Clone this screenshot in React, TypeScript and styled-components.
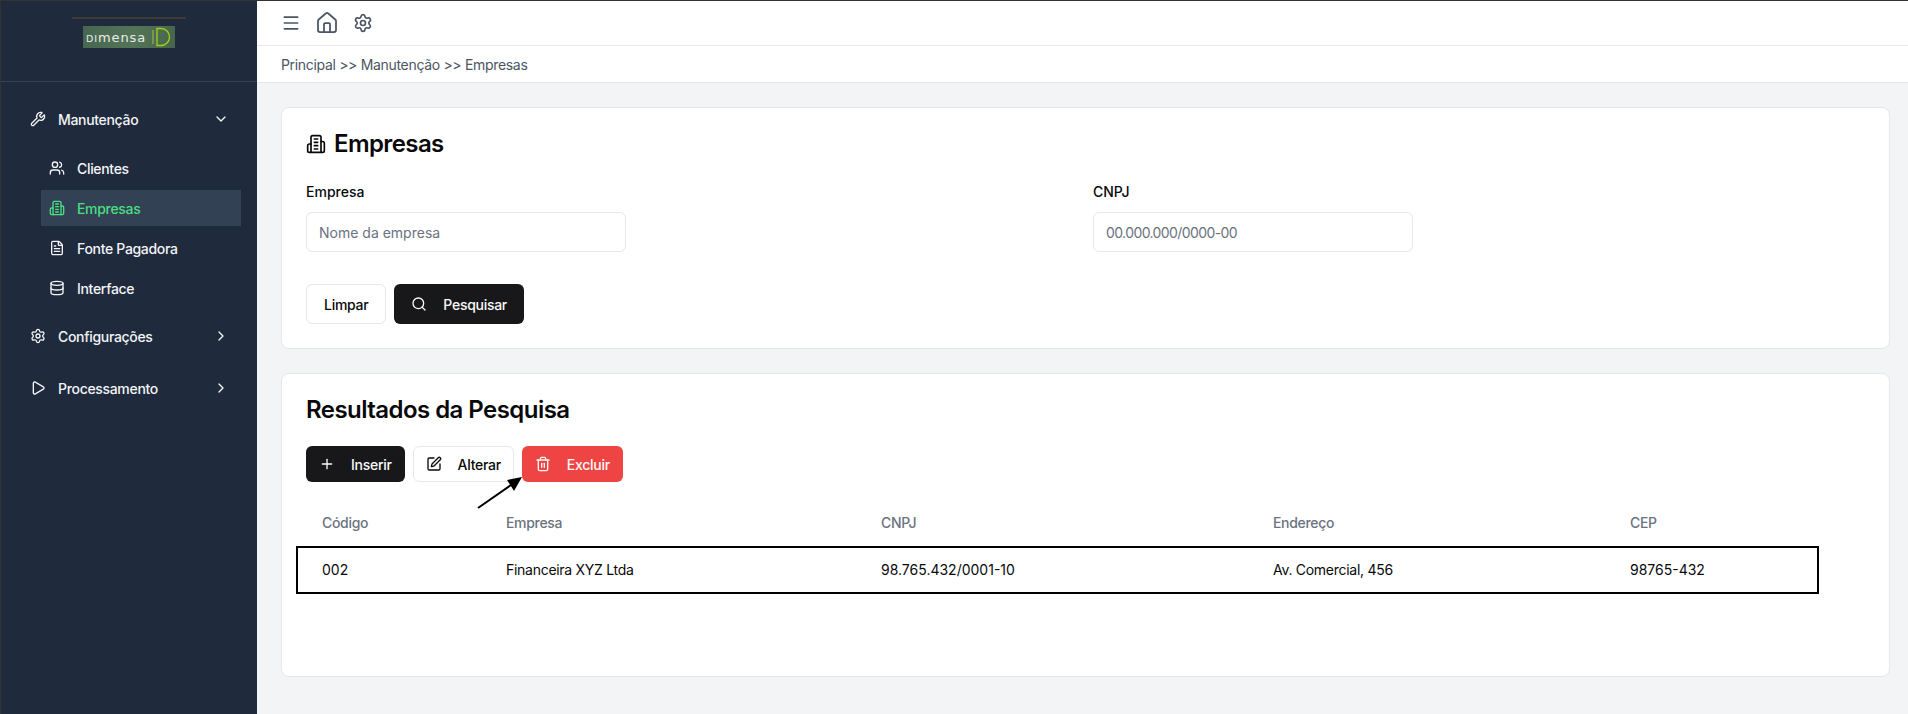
import React from "react";
import styled, { createGlobalStyle } from "styled-components";
import {
  ChevronDown,
  ChevronRight,
  Database,
  FileText,
  House,
  Menu,
  Play,
  Plus,
  Search,
  Settings,
  SquarePen,
  Trash2,
  Users,
  Wrench,
} from "lucide-react";

const GlobalStyle = createGlobalStyle`
  html, body {
    margin: 0;
    padding: 0;
    background: #f3f4f6;
  }
  body {
    font-family: Inter, "Noto Sans", sans-serif;
    letter-spacing: -0.02em;
  }
  * {
    box-sizing: border-box;
  }
`;

const Shell = styled.div`
  display: flex;
  width: 1908px;
  height: 714px;
  overflow: hidden;
  border-top: 1px solid #333;
  border-left: 1px solid #333;
  background: #f3f4f6;
`;

const Sidebar = styled.aside`
  width: 256px;
  flex-shrink: 0;
  background: #1f2a3d;
  color: #f3f4f6;
`;

const LogoArea = styled.div`
  height: 81px;
  border-bottom: 1px solid #374357;
  display: flex;
  flex-direction: column;
  align-items: center;
  padding-top: 16px;
`;

const LogoRule = styled.div`
  width: 114px;
  height: 2px;
  background: #3d3a38;
  margin-bottom: 7px;
`;

const LogoPlate = styled.div`
  width: 92px;
  height: 22px;
  display: flex;
  align-items: center;
  gap: 6px;
  padding-left: 3px;
  background: linear-gradient(100deg, #47664f 0%, #54745a 55%, #46654a 100%);
`;

const LogoText = styled.span`
  font-family: "DejaVu Sans", sans-serif;
  font-size: 13px;
  line-height: 1;
  letter-spacing: 0.9px;
  color: #e8eee6;
  b {
    font-weight: 400;
    font-size: 9.5px;
  }
`;

const Nav = styled.nav`
  display: flex;
  flex-direction: column;
  padding-top: 18px;
`;

const NavGroup = styled.div<{ $height: number }>`
  height: ${(p) => p.$height}px;
  padding: 0 28px 0 29px;
  display: flex;
  align-items: center;
  gap: 12px;
  font-size: 14px;
  font-weight: 500;
  svg:first-child {
    flex-shrink: 0;
  }
  span {
    flex: 1;
  }
`;

const SubMenu = styled.div`
  display: flex;
  flex-direction: column;
  gap: 4px;
  margin: 12px 16px 4px 40px;
`;

const SubItem = styled.div<{ $active?: boolean }>`
  height: 36px;
  padding-left: 8px;
  display: flex;
  align-items: center;
  gap: 12px;
  font-size: 14px;
  font-weight: 500;
  color: ${(p) => (p.$active ? "#4ade80" : "#f3f4f6")};
  background: ${(p) => (p.$active ? "#334155" : "transparent")};
`;

const Main = styled.main`
  flex: 1;
  min-width: 0;
  display: flex;
  flex-direction: column;
`;

const TopBar = styled.header`
  height: 45px;
  background: #fff;
  border-bottom: 1px solid #e5e7eb;
  display: flex;
  align-items: center;
  gap: 14px;
  padding: 0 24px 1px 24px;
  color: #4b5563;
`;

const Breadcrumb = styled.div`
  height: 37px;
  background: #fff;
  border-bottom: 1px solid #e5e7eb;
  display: flex;
  align-items: center;
  padding-left: 24px;
  font-size: 14px;
  color: #4b5563;
`;

const Content = styled.div`
  display: flex;
  flex-direction: column;
  gap: 24px;
  padding: 24px 18px 0 24px;
`;

const Card = styled.section<{ $height: number }>`
  height: ${(p) => p.$height}px;
  background: #fff;
  border: 1px solid #e5e7eb;
  border-radius: 8px;
  padding: 24px;
  position: relative;
`;

const PageTitle = styled.h1`
  margin: 0 0 29px;
  display: flex;
  align-items: center;
  gap: 8px;
  font-size: 24px;
  line-height: 24px;
  font-weight: 600;
  letter-spacing: -0.025em;
  color: #09090b;
`;

const Fields = styled.div`
  display: grid;
  grid-template-columns: 320px 320px;
  column-gap: 467px;
  margin-bottom: 32px;
`;

const Field = styled.div`
  display: flex;
  flex-direction: column;
  gap: 13px;
`;

const Label = styled.label`
  font-size: 14px;
  line-height: 14px;
  font-weight: 500;
  letter-spacing: 0;
  color: #09090b;
`;

const Input = styled.input<{ $spacing?: number }>`
  height: 40px;
  width: 100%;
  padding: 0 12px;
  font-family: inherit;
  font-size: 14px;
  letter-spacing: ${(p) => p.$spacing ?? 0}px;
  border: 1px solid #e5e7eb;
  border-radius: 6px;
  background: #fff;
  &::placeholder {
    color: #6b7280;
    opacity: 1;
  }
`;

const Buttons = styled.div`
  display: flex;
  gap: 8px;
`;

const Button = styled.button<{ $variant: "dark" | "light" | "danger"; $height: number; $padding: number }>`
  height: ${(p) => p.$height}px;
  padding: 0 ${(p) => p.$padding}px;
  display: inline-flex;
  align-items: center;
  gap: 16px;
  font-family: inherit;
  font-size: 14px;
  font-weight: 500;
  letter-spacing: -0.02em;
  border-radius: 6px;
  border: 1px solid
    ${(p) => (p.$variant === "light" ? "#e5e7eb" : "transparent")};
  color: ${(p) => (p.$variant === "light" ? "#09090b" : "#fafafa")};
  background: ${(p) =>
    p.$variant === "dark"
      ? "#18181b"
      : p.$variant === "danger"
      ? "#ef4444"
      : "#fff"};
`;

const SectionTitle = styled.h2`
  margin: 0 0 24px;
  font-size: 24px;
  line-height: 24px;
  font-weight: 600;
  letter-spacing: -0.023em;
  color: #09090b;
`;

const ResultsTable = styled.table`
  width: 1523px;
  margin: 16px 0 0 -10px;
  border-collapse: collapse;
  table-layout: fixed;
  font-size: 14px;
`;

const HeadCell = styled.th<{ $width: number }>`
  width: ${(p) => p.$width}px;
  height: 48px;
  padding: 0 0 0 26px;
  text-align: left;
  font-weight: 500;
  color: #6b7280;
`;

const Row = styled.tr`
  outline: 2px solid #000;
  outline-offset: -2px;
`;

const Cell = styled.td<{ $numeric?: boolean }>`
  height: 48px;
  padding: 0 0 2px 26px;
  color: #09090b;
  letter-spacing: ${(p) => (p.$numeric ? "0" : "-0.02em")};
`;

const Arrow = styled.svg`
  position: absolute;
  left: 194px;
  top: 90px;
`;

const BuildingIcon = ({ size }: { size: number }) => (
  <svg
    width={size}
    height={size}
    viewBox="0 0 24 24"
    fill="none"
    stroke="currentColor"
    strokeWidth="2"
    strokeLinecap="round"
    strokeLinejoin="round"
  >
    <path d="M6 22V4a2 2 0 0 1 2-2h8a2 2 0 0 1 2 2v18Z" />
    <path d="M6 12H4a2 2 0 0 0-2 2v6a2 2 0 0 0 2 2h2" />
    <path d="M18 9h2a2 2 0 0 1 2 2v9a2 2 0 0 1-2 2h-2" />
    <path d="M10 6h4" />
    <path d="M10 10h4" />
    <path d="M10 14h4" />
    <path d="M10 18h4" />
  </svg>
);

const columns = [
  { label: "Código", width: 184 },
  { label: "Empresa", width: 375 },
  { label: "CNPJ", width: 392 },
  { label: "Endereço", width: 357 },
  { label: "CEP", width: 215 },
];

const row = [
  { value: "002", numeric: true },
  { value: "Financeira XYZ Ltda" },
  { value: "98.765.432/0001-10", numeric: true },
  { value: "Av. Comercial, 456" },
  { value: "98765-432", numeric: true },
];

const subItems = [
  { label: "Clientes", Icon: Users },
  { label: "Empresas", Icon: BuildingIcon, active: true },
  { label: "Fonte Pagadora", Icon: FileText },
  { label: "Interface", Icon: Database },
];

export default function App() {
  return (
    <>
      <GlobalStyle />
      <Shell>
        <Sidebar>
          <LogoArea>
            <LogoRule />
            <LogoPlate>
              <LogoText>
                <b>DI</b>mensa
              </LogoText>
              <svg width="19" height="20" viewBox="0 0 19 20" fill="none" stroke="#a3d117" strokeWidth="1.3">
                <path d="M1 3v14" stroke="#8fb04a" />
                <path d="M5 1.5h4a8.5 8.5 0 0 1 0 17H5z" />
              </svg>
            </LogoPlate>
          </LogoArea>
          <Nav>
            <NavGroup $height={38}>
              <Wrench size={16} />
              <span>Manutenção</span>
              <ChevronDown size={16} />
            </NavGroup>
            <SubMenu>
              {subItems.map(({ label, Icon, active }) => (
                <SubItem key={label} $active={active}>
                  <Icon size={16} />
                  {label}
                </SubItem>
              ))}
            </SubMenu>
            <NavGroup $height={52}>
              <Settings size={16} />
              <span>Configurações</span>
              <ChevronRight size={16} />
            </NavGroup>
            <NavGroup $height={52}>
              <Play size={16} />
              <span>Processamento</span>
              <ChevronRight size={16} />
            </NavGroup>
          </Nav>
        </Sidebar>
        <Main>
          <TopBar>
            <Menu size={20} />
            <House size={24} strokeWidth={1.75} />
            <Settings size={20} />
          </TopBar>
          <Breadcrumb>Principal &gt;&gt; Manutenção &gt;&gt; Empresas</Breadcrumb>
          <Content>
            <Card $height={242}>
              <PageTitle>
                <BuildingIcon size={20} />
                Empresas
              </PageTitle>
              <Fields>
                <Field>
                  <Label>Empresa</Label>
                  <Input placeholder="Nome da empresa" readOnly />
                </Field>
                <Field>
                  <Label>CNPJ</Label>
                  <Input placeholder="00.000.000/0000-00" $spacing={-0.6} readOnly />
                </Field>
              </Fields>
              <Buttons>
                <Button $variant="light" $height={40} $padding={17}>Limpar</Button>
                <Button $variant="dark" $height={40} $padding={16}>
                  <Search size={16} />
                  Pesquisar
                </Button>
              </Buttons>
            </Card>
            <Card $height={304}>
              <SectionTitle>Resultados da Pesquisa</SectionTitle>
              <Buttons>
                <Button $variant="dark" $height={36} $padding={12}>
                  <Plus size={16} />
                  Inserir
                </Button>
                <Button $variant="light" $height={36} $padding={12}>
                  <SquarePen size={16} />
                  Alterar
                </Button>
                <Button $variant="danger" $height={36} $padding={12}>
                  <Trash2 size={16} />
                  Excluir
                </Button>
              </Buttons>
              <ResultsTable>
                <thead>
                  <tr>
                    {columns.map((c) => (
                      <HeadCell key={c.label} $width={c.width}>{c.label}</HeadCell>
                    ))}
                  </tr>
                </thead>
                <tbody>
                  <Row>
                    {row.map((c) => (
                      <Cell key={c.value} $numeric={c.numeric}>{c.value}</Cell>
                    ))}
                  </Row>
                </tbody>
              </ResultsTable>
              <Arrow width="50" height="46" viewBox="0 0 50 46">
                <path d="M2 44 L35 21" stroke="#000" strokeWidth="2" />
                <path d="M46 13 L31 16 L38 27 Z" fill="#000" />
              </Arrow>
            </Card>
          </Content>
        </Main>
      </Shell>
    </>
  );
}
